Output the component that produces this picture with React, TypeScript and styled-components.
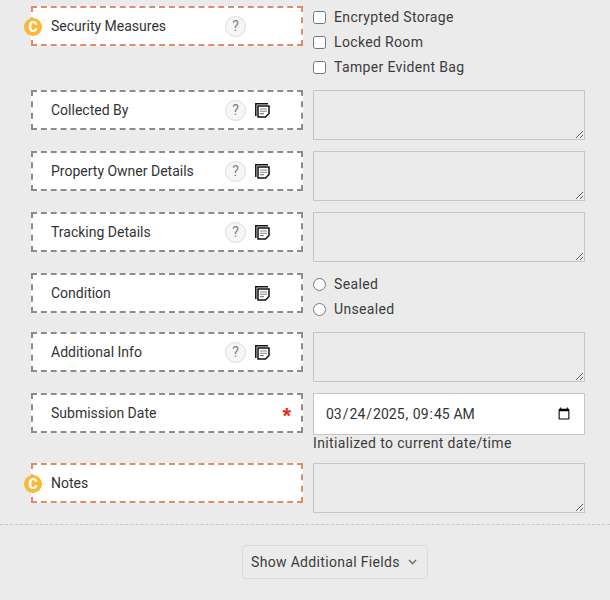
import React from "react";
import styled, { createGlobalStyle } from "styled-components";

const Global = createGlobalStyle`
  html, body { margin: 0; padding: 0; background: #ebebeb; }
  body { font-family: Roboto, "Liberation Sans", sans-serif; color: #333; }
`;
const Page = styled.div`
  width: 610px; height: 600px; overflow: hidden; box-sizing: border-box; padding-top: 6px;
`;
const Rows = styled.div`
  display: flex; flex-direction: column; gap: 11px; padding-left: 31px; width: 554px;
`;
const Row = styled.div`
  display: grid; grid-template-columns: 272px 272px; column-gap: 10px; align-items: start;
`;
const Label = styled.div<{ $custom?: boolean }>`
  position: relative; box-sizing: border-box; height: 40px; background: #fff;
  border: 2px dashed ${p => (p.$custom ? "#dc8d6e" : "#8c8c8c")};
  display: flex; align-items: center; padding-left: 18px;
  font-size: 14px; color: #333;
`;
const LabelText = styled.span`
  flex: 1;
`;
const Badge = styled.span`
  position: absolute; left: -9px; top: 10px; width: 18px; height: 18px; border-radius: 50%;
  background: #f9b934; color: #fff; font-size: 14px; font-weight: 900; line-height: 18px;
  text-align: center;
`;
const Icons = styled.div`
  display: flex; align-items: center; width: 56px; margin-right: 20px; gap: 9px;
`;
const Help = styled.span`
  box-sizing: border-box; width: 21px; height: 21px; border-radius: 50%;
  border: 1px solid #dcdcdc; background: #f6f6f6; color: #808080; font-size: 14px;
  font-weight: 400; line-height: 19px; text-align: center; flex: none;
`;
const NoteIcon = styled.svg<{ $alone?: boolean }>`
  width: 15px; height: 15px; flex: none; margin-left: ${p => (p.$alone ? "30px" : "0")};
`;
const Star = styled.span`
  position: absolute; right: 10px; top: 8px; color: #f0291a; font-size: 22px; line-height: 26px;
  font-weight: 700; font-family: "Liberation Sans", sans-serif;
`;
const Area = styled.textarea`
  display: block; box-sizing: border-box; width: 272px; height: 50px; margin: 0;
  background: #ebebeb; border: 1px solid #c6c6c6; border-radius: 0; outline: none;
`;
const Options = styled.div`
  display: flex; flex-direction: column; gap: 5px; padding: 1px 0 2px; font-size: 14px;
  letter-spacing: 0.35px; color: #3c3c3c;
`;
const Option = styled.label`
  display: flex; align-items: center; height: 20px; gap: 8px;
`;
const Check = styled.input`
  width: 13px; height: 13px; margin: 0; flex: none;
`;
const DateCol = styled.div`
  display: flex; flex-direction: column;
`;
const DateBox = styled.input`
  box-sizing: border-box; width: 272px; height: 42px; background: #fff; border: 1px solid #c6c6c6;
  border-radius: 0; padding: 0 11px; margin: 0; font-family: Roboto, sans-serif; font-size: 14px;
  letter-spacing: 0; color: #333; outline: none;
`;
const Hint = styled.div`
  font-size: 14px; letter-spacing: 0.35px; color: #3c3c3c; line-height: 17px;
`;
const Divider = styled.div`
  border-top: 1px dashed #c8c8c8; margin-top: 11px;
`;
const Footer = styled.div`
  display: flex; justify-content: center; padding: 20px 0 0 60px;
`;
const ShowBtn = styled.button`
  box-sizing: border-box; width: 186px; height: 34px; display: flex; align-items: center; gap: 8px;
  background: #ebebeb; border: 1px solid #dadada; border-radius: 4px; padding: 0 0 0 8px;
  font-family: Roboto, sans-serif; font-size: 14px; letter-spacing: 0.33px; color: #3c3c3c;
`;

const Note = ({ alone }: { alone?: boolean }) => (
  <NoteIcon $alone={alone} viewBox="0 0 15 15" fill="none">
    <path d="M.8 13V.8H13" stroke="#111" strokeWidth="1.5" />
    <path d="M3 3h11v7.5L10.5 14H3V3Z" fill="#fff" stroke="#111" strokeWidth="1.5" />
    <path d="M5 6h7M5 8.3h7M5 10.6h4" stroke="#888" strokeWidth="1.1" />
  </NoteIcon>
);

const LabelBox = ({ text, help, note, custom, req }: { text: string; help?: boolean; note?: boolean; custom?: boolean; req?: boolean }) => (
  <Label $custom={custom}>
    {custom && <Badge>C</Badge>}
    <LabelText>{text}</LabelText>
    {(help || note) && (
      <Icons>
        {help && <Help>?</Help>}
        {note && <Note alone={!help} />}
      </Icons>
    )}
    {req && <Star>*</Star>}
  </Label>
);

export default function App() {
  return (
    <Page>
      <Global />
      <Rows>
        <Row>
          <LabelBox text="Security Measures" help custom />
          <Options>
            <Option><Check type="checkbox" />Encrypted Storage</Option>
            <Option><Check type="checkbox" />Locked Room</Option>
            <Option><Check type="checkbox" />Tamper Evident Bag</Option>
          </Options>
        </Row>
        <Row><LabelBox text="Collected By" help note /><Area /></Row>
        <Row><LabelBox text="Property Owner Details" help note /><Area /></Row>
        <Row><LabelBox text="Tracking Details" help note /><Area /></Row>
        <Row>
          <LabelBox text="Condition" note />
          <Options>
            <Option><Check type="radio" name="cond" />Sealed</Option>
            <Option><Check type="radio" name="cond" />Unsealed</Option>
          </Options>
        </Row>
        <Row><LabelBox text="Additional Info" help note /><Area /></Row>
        <Row>
          <LabelBox text="Submission Date" req />
          <DateCol>
            <DateBox type="datetime-local" defaultValue="2025-03-24T09:45" />
            <Hint>Initialized to current date/time</Hint>
          </DateCol>
        </Row>
        <Row><LabelBox text="Notes" custom /><Area /></Row>
      </Rows>
      <Divider />
      <Footer>
        <ShowBtn>
          Show Additional Fields
          <svg width="9" height="6" viewBox="0 0 9 6" fill="none"><path d="M1 1l3.5 3.5L8 1" stroke="#777" strokeWidth="1.6" /></svg>
        </ShowBtn>
      </Footer>
    </Page>
  );
}
